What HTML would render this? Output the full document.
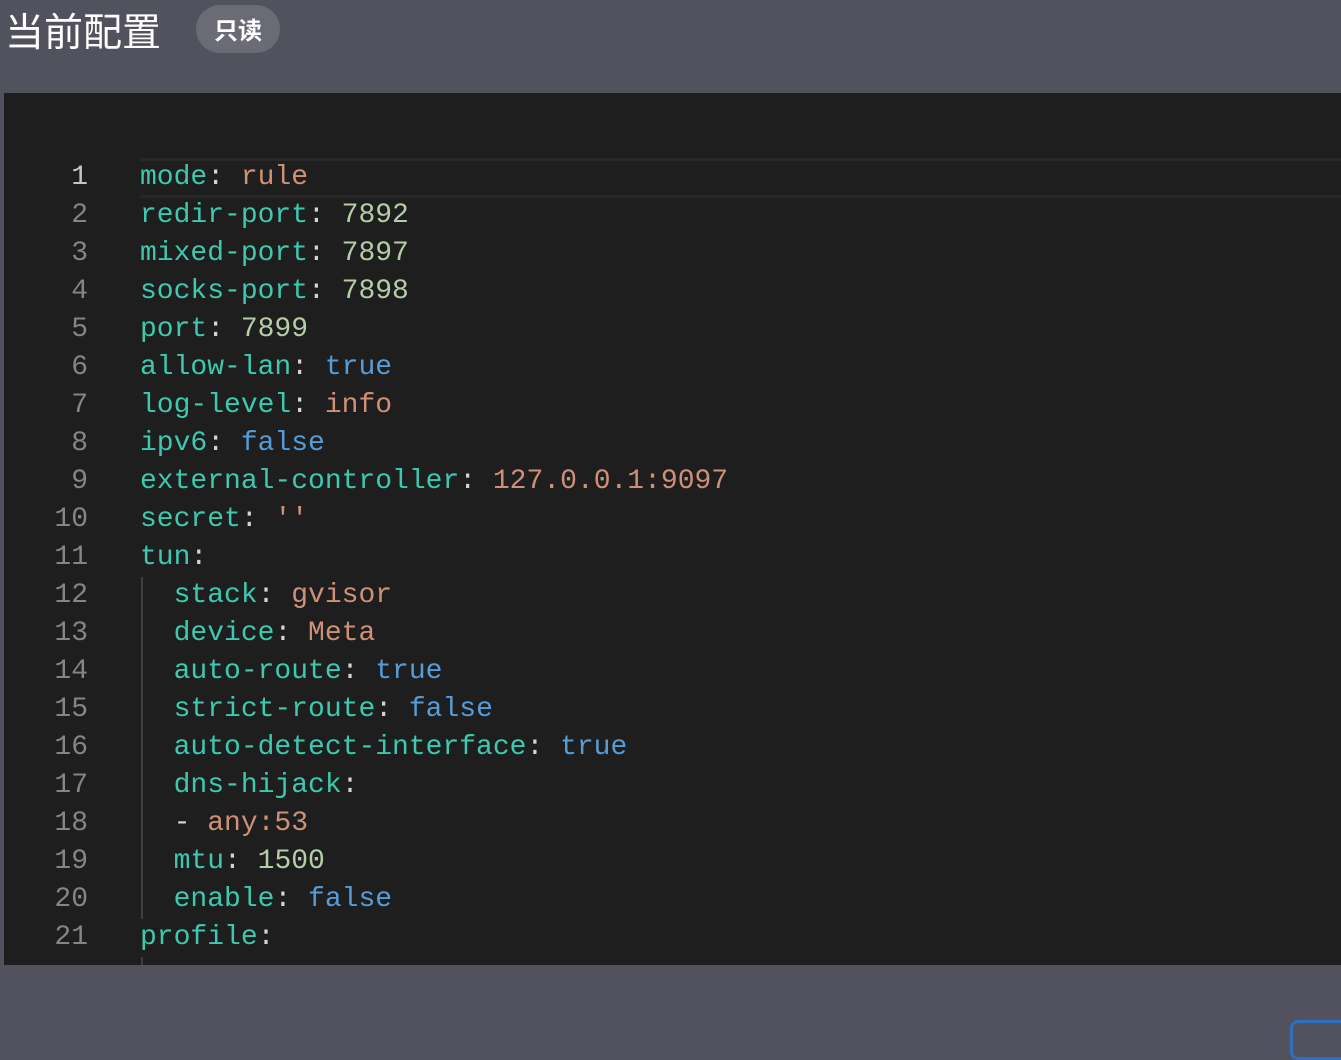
<!DOCTYPE html>
<html><head><meta charset="utf-8"><style>
html,body{margin:0;padding:0;}
body{width:1341px;height:1035px;background:#52525e;position:relative;overflow:hidden;font-family:"Liberation Sans","Noto Sans CJK SC",sans-serif;}
.title{position:absolute;left:5px;top:5px;font-size:39px;color:#fff;line-height:50px;font-family:"Noto Sans CJK SC",sans-serif;}
.badge{position:absolute;left:196px;top:5px;width:84px;height:48px;border-radius:24px;background:#6b6b75;color:#fff;font-size:24px;line-height:48px;text-align:center;font-family:"Noto Sans CJK SC",sans-serif;font-weight:bold;}
.ed{position:absolute;left:4px;top:93px;width:1337px;height:872px;background:#1e1e1e;overflow:hidden;}
.cur{position:absolute;left:136px;top:65px;right:0;height:34px;border-top:3px solid #282828;border-bottom:3px solid #282828;}
.guide{position:absolute;left:137px;top:484px;width:2px;height:342px;background:#404040;}
.guide2{position:absolute;left:137px;top:864px;width:2px;height:10px;background:#404040;}
.code{position:absolute;left:0;top:66px;font-family:"Liberation Mono",monospace;font-size:28px;}
.l{height:38px;line-height:38px;white-space:pre;position:relative;}
.n{position:absolute;left:0;width:84px;text-align:right;color:#858585;}
.n.a{color:#c6c6c6;}
.t{position:absolute;left:136px;color:#d4d4d4;}
.k{color:#3dc9b0}.s{color:#ce9178}.d{color:#b5cea8}.b{color:#569cd6}.p{color:#d4d4d4}
.blue{position:absolute;left:1290px;top:1020px;width:80px;height:40px;border:3px solid #2f6fbf;border-radius:8px;box-sizing:border-box;}
</style></head><body>
<div class="title">当前配置</div>
<div class="badge">只读</div>
<div class="ed">
<div class="cur"></div>
<div class="guide"></div>
<div class="guide2"></div>
<div class="code">
<div class="l"><span class="n a">1</span><span class="t"><span class="k">mode</span>: <span class="s">rule</span></span></div>
<div class="l"><span class="n">2</span><span class="t"><span class="k">redir-port</span>: <span class="d">7892</span></span></div>
<div class="l"><span class="n">3</span><span class="t"><span class="k">mixed-port</span>: <span class="d">7897</span></span></div>
<div class="l"><span class="n">4</span><span class="t"><span class="k">socks-port</span>: <span class="d">7898</span></span></div>
<div class="l"><span class="n">5</span><span class="t"><span class="k">port</span>: <span class="d">7899</span></span></div>
<div class="l"><span class="n">6</span><span class="t"><span class="k">allow-lan</span>: <span class="b">true</span></span></div>
<div class="l"><span class="n">7</span><span class="t"><span class="k">log-level</span>: <span class="s">info</span></span></div>
<div class="l"><span class="n">8</span><span class="t"><span class="k">ipv6</span>: <span class="b">false</span></span></div>
<div class="l"><span class="n">9</span><span class="t"><span class="k">external-controller</span>: <span class="s">127.0.0.1:9097</span></span></div>
<div class="l"><span class="n">10</span><span class="t"><span class="k">secret</span>: <span class="s">''</span></span></div>
<div class="l"><span class="n">11</span><span class="t"><span class="k">tun</span>:</span></div>
<div class="l"><span class="n">12</span><span class="t">  <span class="k">stack</span>: <span class="s">gvisor</span></span></div>
<div class="l"><span class="n">13</span><span class="t">  <span class="k">device</span>: <span class="s">Meta</span></span></div>
<div class="l"><span class="n">14</span><span class="t">  <span class="k">auto-route</span>: <span class="b">true</span></span></div>
<div class="l"><span class="n">15</span><span class="t">  <span class="k">strict-route</span>: <span class="b">false</span></span></div>
<div class="l"><span class="n">16</span><span class="t">  <span class="k">auto-detect-interface</span>: <span class="b">true</span></span></div>
<div class="l"><span class="n">17</span><span class="t">  <span class="k">dns-hijack</span>:</span></div>
<div class="l"><span class="n">18</span><span class="t">  - <span class="s">any:53</span></span></div>
<div class="l"><span class="n">19</span><span class="t">  <span class="k">mtu</span>: <span class="d">1500</span></span></div>
<div class="l"><span class="n">20</span><span class="t">  <span class="k">enable</span>: <span class="b">false</span></span></div>
<div class="l"><span class="n">21</span><span class="t"><span class="k">profile</span>:</span></div>
</div>
</div>
<div class="blue"></div>
</body></html>
